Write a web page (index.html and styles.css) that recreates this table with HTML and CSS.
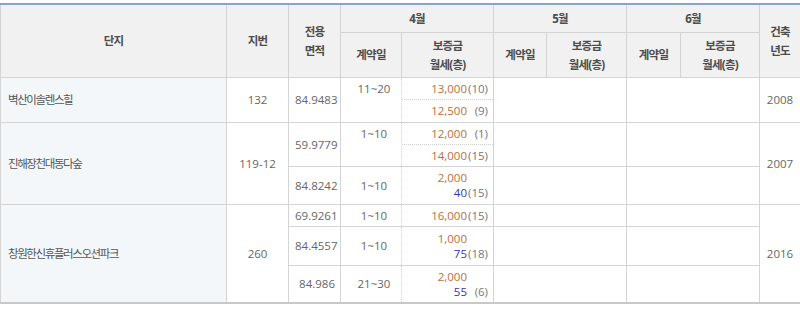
FILE: index.html
```html
<!DOCTYPE html>
<html lang="ko">
<head>
<meta charset="utf-8">
<title>실거래가</title>
<link rel="stylesheet" href="styles.css">
</head>
<body>
<div class="wrap">
<table class="trade">
  <colgroup>
    <col class="w-name"><col class="w-lot"><col class="w-area">
    <col class="w-date"><col class="w-money">
    <col class="w-date5"><col class="w-money5">
    <col class="w-date6"><col class="w-money6">
    <col class="w-year">
  </colgroup>
  <thead>
    <tr class="hr1">
      <th rowspan="2">단지</th>
      <th rowspan="2">지번</th>
      <th rowspan="2">전용<br>면적</th>
      <th colspan="2">4월</th>
      <th colspan="2">5월</th>
      <th colspan="2">6월</th>
      <th rowspan="2">건축<br>년도</th>
    </tr>
    <tr class="hr2">
      <th>계약일</th><th>보증금<br>월세(층)</th>
      <th>계약일</th><th>보증금<br>월세(층)</th>
      <th>계약일</th><th>보증금<br>월세(층)</th>
    </tr>
  </thead>
  <tbody>
    <tr class="h45">
      <td class="name">벽산이솔렌스힐</td>
      <td class="c">132</td>
      <td class="num">84.9483</td>
      <td class="date top">11~20</td>
      <td class="money">
        <div class="deal"><span class="dep">13,000</span><span class="fl">(10)</span></div>
        <div class="deal"><span class="dep">12,500</span><span class="fl">(9)</span></div>
      </td>
      <td colspan="2"></td>
      <td colspan="2"></td>
      <td class="c">2008</td>
    </tr>
    <tr class="h44">
      <td class="name" rowspan="2">진해장천대동다숲</td>
      <td class="c" rowspan="2">119-12</td>
      <td class="num">59.9779</td>
      <td class="date top">1~10</td>
      <td class="money">
        <div class="deal"><span class="dep">12,000</span><span class="fl">(1)</span></div>
        <div class="deal"><span class="dep">14,000</span><span class="fl">(15)</span></div>
      </td>
      <td colspan="2"></td>
      <td colspan="2"></td>
      <td class="c" rowspan="2">2007</td>
    </tr>
    <tr class="h38">
      <td class="num">84.8242</td>
      <td class="date">1~10</td>
      <td class="money">
        <div class="deal two">
          <div class="line"><span class="dep">2,000</span><span class="fl"></span></div>
          <div class="line"><span class="rent">40</span><span class="fl">(15)</span></div>
        </div>
      </td>
      <td colspan="2"></td>
      <td colspan="2"></td>
    </tr>
    <tr class="h22">
      <td class="name" rowspan="3">창원한신휴플러스오션파크</td>
      <td class="c" rowspan="3">260</td>
      <td class="num">69.9261</td>
      <td class="date">1~10</td>
      <td class="money">
        <div class="deal"><span class="dep">16,000</span><span class="fl">(15)</span></div>
      </td>
      <td colspan="2"></td>
      <td colspan="2"></td>
      <td class="c" rowspan="3">2016</td>
    </tr>
    <tr class="h39">
      <td class="num">84.4557</td>
      <td class="date">1~10</td>
      <td class="money">
        <div class="deal two">
          <div class="line"><span class="dep">1,000</span><span class="fl"></span></div>
          <div class="line"><span class="rent">75</span><span class="fl">(18)</span></div>
        </div>
      </td>
      <td colspan="2"></td>
      <td colspan="2"></td>
    </tr>
    <tr class="h36">
      <td class="num">84.986</td>
      <td class="date">21~30</td>
      <td class="money">
        <div class="deal two">
          <div class="line"><span class="dep">2,000</span><span class="fl"></span></div>
          <div class="line"><span class="rent">55</span><span class="fl">(6)</span></div>
        </div>
      </td>
      <td colspan="2"></td>
      <td colspan="2"></td>
    </tr>
  </tbody>
</table>
</div>
</body>
</html>
```

FILE: styles.css
```css
html, body {
  margin: 0;
  padding: 0;
  background: #fff;
}
body {
  font-family: "Open Sans", "Noto Sans CJK KR", sans-serif;
  font-size: 11.5px;
  color: #666;
}
.wrap {
  padding-top: 3px;
}
.trade {
  width: 800px;
  table-layout: fixed;
  border-collapse: collapse;
  border-top: 2px solid #84a5c8;
  border-bottom: 2px solid #c8c8c8;
  border-left: 1px solid #d2d2d2;
  box-shadow: 0 1px 2px rgba(0, 0, 0, 0.12);
}
.w-name { width: 226px; }
.w-lot { width: 62px; }
.w-area { width: 52px; }
.w-date { width: 61px; }
.w-money { width: 92px; }
.w-date5 { width: 53px; }
.w-money5 { width: 80px; }
.w-date6 { width: 54px; }
.w-money6 { width: 79px; }
.w-year { width: 41px; }

.trade th {
  background: #f1f1f1;
  color: #4d4d4d;
  font-weight: bold;
  font-size: 11.5px;
  line-height: 19px;
  letter-spacing: -0.8px;
  border: 1px solid #d4d4d4;
  padding: 0;
  text-align: center;
  vertical-align: middle;
}
.hr1 { height: 28px; }
.hr2 { height: 45px; }

.trade td {
  border: 1px solid #d4d4d4;
  padding: 0 6px;
  vertical-align: middle;
  line-height: 21px;
}
.h45 { height: 45px; }
.h44 { height: 44px; }
.h38 { height: 38px; }
.h22 { height: 22px; }
.h39 { height: 39px; }
.h36 { height: 36px; }

.trade td.name {
  background: #f4f7fa;
  color: #555;
  padding-left: 7px;
  letter-spacing: -1.4px;
}
.trade td.c {
  text-align: center;
}
.trade td.num {
  text-align: right;
  padding-right: 5px;
}
.trade td.date {
  text-align: center;
  border-right-style: dotted;
  padding: 0 2px 0 8px;
}
.trade td.date.top {
  vertical-align: top;
  padding-top: 0;
}
.trade td.money {
  padding: 0;
  border-left-style: dotted;
}
.deal {
  display: flex;
  justify-content: flex-end;
  padding: 0 5px;
  line-height: 21px;
}
.deal + .deal {
  border-top: 1px dotted #d0d0d0;
}
.deal.two {
  flex-direction: column;
  padding: 3px 5px;
  line-height: 15px;
}
.line {
  display: flex;
  justify-content: flex-end;
}
.dep { color: #b5703e; }
.rent { color: #3535a8; }
.fl {
  width: 21px;
  text-align: right;
  color: #777;
}
```
